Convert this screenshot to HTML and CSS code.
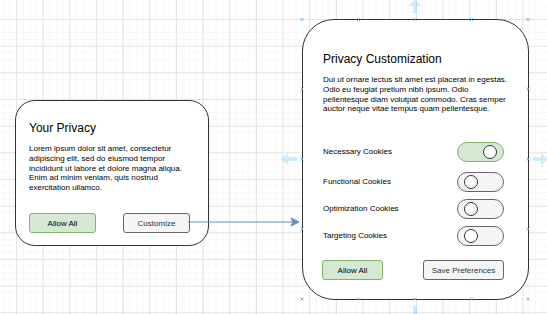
FILE: index.html
```html
<!DOCTYPE html>
<html lang="en">
<head>
    <meta charset="UTF-8">
    <meta name="viewport" content="width=device-width, initial-scale=1.0">
    <title>Cookie Consent Flow</title>
    <link rel="stylesheet" href="styles.css">
</head>
<body>
    <div class="canvas">
        <!-- 第一个弹窗 -->
        <div class="card card-privacy">
            <div class="card-title">Your Privacy</div>
            <div class="card-text text-privacy">Lorem ipsum dolor sit amet, consectetur adipiscing elit, sed do eiusmod tempor incididunt ut labore et dolore magna aliqua. Enim ad minim veniam, quis nostrud exercitation ullamco.</div>
            <div class="card-actions">
                <div class="btn btn-green btn-allow">Allow All</div>
                <div class="btn btn-gray btn-custom">Customize</div>
            </div>
        </div>

        <!-- 第二个弹窗 -->
        <div class="card card-custom">
            <div class="card-title">Privacy Customization</div>
            <div class="card-text text-custom">Dui ut ornare lectus sit amet est placerat in egestas. Odio eu feugiat pretium nibh ipsum. Odio pellentesque diam volutpat commodo. Cras semper auctor neque vitae tempus quam pellentesque.</div>
            <div class="cookie-list">
                <div class="cookie-row">
                    <span>Necessary Cookies</span>
                    <div class="toggle on"><div class="knob"></div></div>
                </div>
                <div class="cookie-row">
                    <span>Functional Cookies</span>
                    <div class="toggle"><div class="knob"></div></div>
                </div>
                <div class="cookie-row">
                    <span>Optimization Cookies</span>
                    <div class="toggle"><div class="knob"></div></div>
                </div>
                <div class="cookie-row">
                    <span>Targeting Cookies</span>
                    <div class="toggle"><div class="knob"></div></div>
                </div>
            </div>
            <div class="card-actions">
                <div class="btn btn-green btn-allow-sm">Allow All</div>
                <div class="btn btn-gray btn-save">Save Preferences</div>
            </div>
        </div>

        <!-- 连线和选中状态 -->
        <svg class="overlay" width="547" height="314" viewBox="0 0 547 314">
            <line x1="188" y1="222" x2="294" y2="222" stroke="#6c8ebf" stroke-width="1"/>
            <path d="M299 222 L291 218 L293 222 L291 226 Z" fill="#6c8ebf" stroke="#6c8ebf" stroke-width="1"/>

            <g fill="#29b6f2" opacity="0.22">
                <rect x="413" y="5" width="4" height="8"/>
                <path d="M409 6 L421 6 L415 -1 Z"/>
                <rect x="413" y="306" width="4" height="10"/>
                <rect x="288" y="157" width="9" height="4"/>
                <path d="M288 153 L288 165 L281 159 Z"/>
                <rect x="533" y="157" width="8" height="4"/>
                <path d="M541 153 L541 165 L548 159 Z"/>
            </g>

            <g stroke="#5aaaf0" stroke-width="1" opacity="0.8">
                <path d="M300.5 18 l3 3 m0 -3 l-3 3"/>
                <path d="M357 18 l3 3 m0 -3 l-3 3"/>
                <path d="M413.5 18 l3 3 m0 -3 l-3 3"/>
                <path d="M470 18 l3 3 m0 -3 l-3 3"/>
                <path d="M526.5 18 l3 3 m0 -3 l-3 3"/>
                <path d="M300.5 297.5 l3 3 m0 -3 l-3 3"/>
                <path d="M357 297.5 l3 3 m0 -3 l-3 3"/>
                <path d="M413.5 297.5 l3 3 m0 -3 l-3 3"/>
                <path d="M470 297.5 l3 3 m0 -3 l-3 3"/>
                <path d="M526.5 297.5 l3 3 m0 -3 l-3 3"/>
                <path d="M300.5 87.5 l3 3 m0 -3 l-3 3"/>
                <path d="M300.5 157.5 l3 3 m0 -3 l-3 3"/>
                <path d="M300.5 227.5 l3 3 m0 -3 l-3 3"/>
                <path d="M526.5 87.5 l3 3 m0 -3 l-3 3"/>
                <path d="M526.5 157.5 l3 3 m0 -3 l-3 3"/>
                <path d="M526.5 227.5 l3 3 m0 -3 l-3 3"/>
            </g>
        </svg>
    </div>
</body>
</html>
```

FILE: styles.css
```css
body {
    margin: 0;
    font-family: "Liberation Sans", Arial, Helvetica, sans-serif;
    color: #000;
}
.canvas {
    position: relative;
    width: 547px;
    height: 314px;
    overflow: hidden;
    background-color: #fff;
    background-image:
        linear-gradient(to right, #e4e4e4 1px, transparent 1px),
        linear-gradient(to bottom, #e4e4e4 1px, transparent 1px),
        linear-gradient(to right, #f7f7f7 1px, transparent 1px),
        linear-gradient(to bottom, #f7f7f7 1px, transparent 1px);
    background-size: 26.667px 26.667px, 26.667px 26.667px, 6.667px 6.667px, 6.667px 6.667px;
    background-position: 16px 19px;
}
.card {
    position: absolute;
    box-sizing: border-box;
    background-color: #fff;
    border: 1px solid #333;
    display: flex;
    flex-direction: column;
}
.card-privacy {
    left: 15px;
    top: 100px;
    width: 194px;
    height: 146px;
    border-radius: 20px;
    padding: 20px 18px 12px 13px;
}
.card-custom {
    left: 302px;
    top: 19px;
    width: 227px;
    height: 281px;
    border-radius: 32px;
    padding: 32px 24px 19px 20px;
}
.card-title {
    font-size: 12px;
    line-height: 1.2;
}
.card-text {
    margin-top: 9px;
    font-size: 8px;
    line-height: 1.2;
}
.text-privacy {
    width: 162px;
}
.text-custom {
    width: 188px;
}
.card-actions {
    margin-top: auto;
    display: flex;
    justify-content: space-between;
}
.btn {
    height: 20px;
    box-sizing: border-box;
    border-radius: 3px;
    font-size: 8px;
    display: flex;
    align-items: center;
    justify-content: center;
}
.btn-green {
    background-color: #d5e8d4;
    border: 1px solid #82b366;
}
.btn-gray {
    background-color: #f5f5f5;
    border: 1px solid #666;
    color: #333;
}
.btn-allow {
    width: 67px;
}
.btn-custom {
    width: 67px;
}
.btn-allow-sm {
    width: 61px;
    margin-left: -1px;
}
.btn-save {
    width: 81px;
}
.cookie-list {
    margin-top: 28px;
    display: flex;
    flex-direction: column;
    gap: 7px;
}
.cookie-row {
    display: flex;
    justify-content: space-between;
    align-items: center;
    font-size: 8px;
}
.cookie-row:first-child {
    margin-bottom: 3px;
}
.toggle {
    width: 47px;
    height: 20px;
    box-sizing: border-box;
    border: 1px solid #666;
    border-radius: 10px;
    background-color: #f5f5f5;
    display: flex;
    align-items: center;
    padding: 0 6px;
}
.toggle.on {
    background-color: #d5e8d4;
    border-color: #82b366;
    justify-content: flex-end;
}
.knob {
    width: 14px;
    height: 14px;
    box-sizing: border-box;
    border: 1px solid #333;
    border-radius: 50%;
    background-color: #fff;
}
.overlay {
    position: absolute;
    left: 0;
    top: 0;
    pointer-events: none;
}
```
